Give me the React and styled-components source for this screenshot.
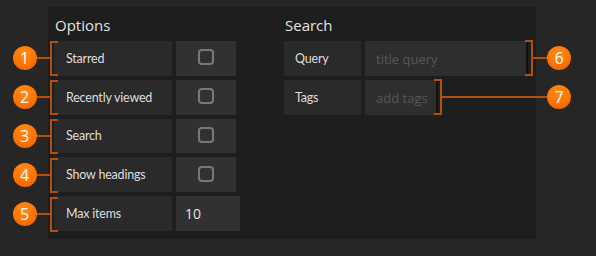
import React from "react";
import styled, { createGlobalStyle } from "styled-components";

const GlobalStyle = createGlobalStyle`
  html, body {
    margin: 0;
    padding: 0;
    background: #262626;
  }
  body {
    font-family: "Open Sans", "Noto Sans", sans-serif;
  }
`;

const Page = styled.div`
  position: relative;
  width: 596px;
  height: 256px;
  padding: 7px 0 0 48px;
  box-sizing: border-box;
`;

const Panel = styled.div`
  width: 488px;
  height: 232px;
  box-sizing: border-box;
  background: #1e1e1e;
  padding: 8px 8px 8px 6px;
  display: flex;
  gap: 44px;
`;

const Column = styled.div`
  display: flex;
  flex-direction: column;
  gap: 4px;
  width: ${(p) => p.width}px;
`;

const Heading = styled.div`
  color: #e2e2e2;
  font-size: 15px;
  line-height: 21px;
  height: 21px;
  padding-left: 1px;
  margin-bottom: 1px;
`;

const Row = styled.div`
  display: flex;
  gap: 4px;
  height: 35px;
`;

const Label = styled.div`
  width: ${(p) => p.width}px;
  background: #2a2a2a;
  color: #dedede;
  font-family: "Lato", sans-serif;
  font-size: 12.5px;
  letter-spacing: -0.2px;
  display: flex;
  align-items: center;
  padding-left: ${(p) => p.pad}px;
  box-sizing: border-box;
`;

const Cell = styled.div`
  width: ${(p) => p.width}px;
  background: #313131;
  display: flex;
  align-items: center;
  justify-content: ${(p) => (p.center ? "center" : "flex-start")};
  box-sizing: border-box;
`;

const Checkbox = styled.span`
  width: 16px;
  height: 16px;
  box-sizing: border-box;
  border: 2px solid #787878;
  border-radius: 4px;
  margin-top: -2px;
`;

const NumberValue = styled.span`
  color: #e4e4e4;
  font-size: 14px;
  padding-left: 9px;
`;

const TextInput = styled.div`
  width: ${(p) => p.width}px;
  background: #2e2e2e;
  border-right: 2px solid #121212;
  color: #575757;
  font-size: 13px;
  display: flex;
  align-items: center;
  padding-left: 11px;
  box-sizing: border-box;
`;

const Badge = styled.div`
  position: absolute;
  left: ${(p) => p.x - 12}px;
  top: ${(p) => p.y - 12}px;
  width: 24px;
  height: 24px;
  border-radius: 50%;
  background: radial-gradient(circle at 45% 30%, #ff8d1c 0%, #ff7300 55%, #e25c00 100%);
  color: #fff;
  font-size: 16px;
  line-height: 24px;
  text-align: center;
`;

const Bracket = styled.div`
  position: absolute;
  left: ${(p) => p.x}px;
  top: ${(p) => p.y}px;
  width: 8px;
  height: ${(p) => p.h}px;
  box-sizing: border-box;
  border: 2px solid #b4500e;
  ${(p) => (p.right ? "border-left: none;" : "border-right: none;")}
`;

const Connector = styled.div`
  position: absolute;
  left: ${(p) => p.x}px;
  top: ${(p) => p.y - 1}px;
  width: ${(p) => p.w}px;
  height: 2px;
  background: #b4500e;
`;

const options = [
  { label: "Starred" },
  { label: "Recently viewed" },
  { label: "Search" },
  { label: "Show headings" },
  { label: "Max items", value: "10" },
];

export default function App() {
  return (
    <>
      <GlobalStyle />
      <Page>
        <Panel>
          <Column width={186}>
            <Heading>Options</Heading>
            {options.map((o) => (
              <Row key={o.label}>
                <Label width={118} pad={12}>{o.label}</Label>
                {o.value ? (
                  <Cell width={64}>
                    <NumberValue>{o.value}</NumberValue>
                  </Cell>
                ) : (
                  <Cell width={60} center>
                    <Checkbox />
                  </Cell>
                )}
              </Row>
            ))}
          </Column>
          <Column width={244}>
            <Heading>Search</Heading>
            <Row>
              <Label width={77} pad={11}>Query</Label>
              <TextInput width={163}>title query</TextInput>
            </Row>
            <Row>
              <Label width={77} pad={11}>Tags</Label>
              <TextInput width={73}>add tags</TextInput>
            </Row>
          </Column>
        </Panel>

        {options.map((o, i) => {
          const top = 40 + i * 39;
          const mid = top + 17.5;
          return (
            <React.Fragment key={o.label}>
              <Bracket x={50} y={top + 1} h={35} />
              <Connector x={37} y={mid} w={13} />
              <Badge x={24.5} y={mid}>{i + 1}</Badge>
            </React.Fragment>
          );
        })}

        <Bracket right x={525} y={40} h={36} />
        <Connector x={533} y={57.5} w={14} />
        <Badge x={559} y={57.5}>6</Badge>

        <Bracket right x={434} y={79} h={36} />
        <Connector x={442} y={97} w={105} />
        <Badge x={559} y={97}>7</Badge>
      </Page>
    </>
  );
}
